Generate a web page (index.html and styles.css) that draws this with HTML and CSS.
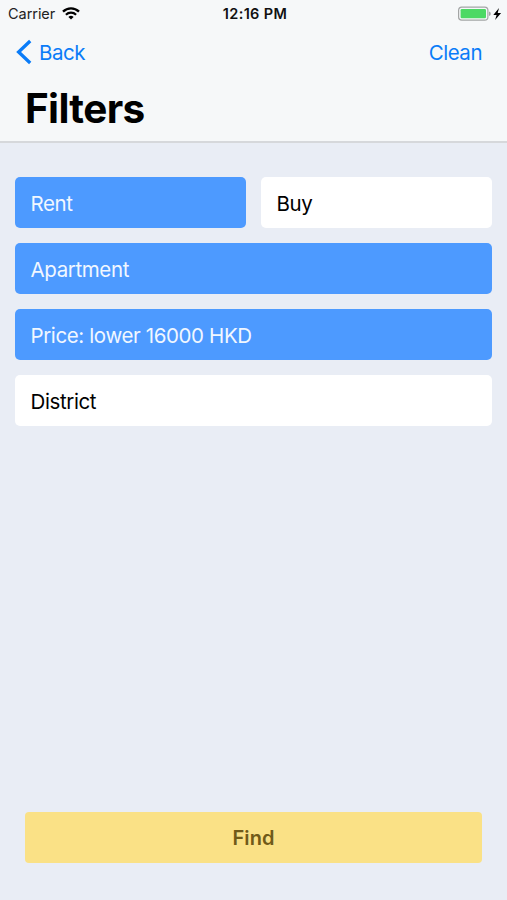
FILE: index.html
```html
<!DOCTYPE html>
<html lang="en">
<head>
<meta charset="utf-8">
<title>Filters</title>
<link rel="stylesheet" href="styles.css">
</head>
<body>
<header class="header">
  <div class="status">
    <div class="carrier"><span class="carrier-name">Carrier</span>
      <svg class="wifi" viewBox="0 0 18 13" width="18" height="13"><path d="M1 4.600a11.600 11.600 0 0 1 16 0" fill="none" stroke="#000" stroke-width="2.400"/><path d="M3.900 7.700a7.400 7.400 0 0 1 10.200 0" fill="none" stroke="#000" stroke-width="2.200"/><path d="M9 12.600L6.400 10a3.700 3.700 0 0 1 5.200 0z"/></svg>
    </div>
    <div class="time">12:16 PM</div>
    <div class="power">
      <svg viewBox="0 0 44 16" width="44" height="16"><rect x=".6" y="1.100" width="29.300" height="13" rx="3.200" fill="none" stroke="#a3a5a5" stroke-width="1.200"/><rect x="2.600" y="3" width="25.400" height="9.200" rx="1.200" fill="#4cd964"/><path d="M31 5.500q1.800.6 1.800 2.300t-1.800 2.300z" fill="#a3a5a5"/><path d="M41 2l-5.700 6.900h3.300L37.100 14l6-7.100h-3.400z"/></svg>
    </div>
  </div>
  <nav class="nav">
    <a class="back"><svg viewBox="0 0 16 26" width="16" height="26"><path d="M14.200 2L2.600 13l11.600 11" fill="none" stroke="#0a7cf8" stroke-width="3.300"/></svg><span>Back</span></a>
    <a class="clean">Clean</a>
  </nav>
  <h1 class="title">Filters</h1>
</header>
<main class="filters">
  <div class="row"><div class="option on">Rent</div><div class="option">Buy</div></div>
  <div class="option on">Apartment</div>
  <div class="option on">Price: lower 16000 HKD</div>
  <div class="option">District</div>
</main>
<footer class="footer"><button class="find">Find</button></footer>
</body>
</html>
```
FILE: styles.css
```css
* { box-sizing: border-box; }
body { margin: 0; height: 900px; display: flex; flex-direction: column; background: #e9edf5; font-family: Inter, "Liberation Sans", sans-serif; color: #000; }
.header { height: 143px; background: #f6f8f9; border-bottom: 2px solid #d6d8db; }
.status { height: 27px; display: grid; grid-template-columns: 1fr auto 1fr; align-items: center; padding: 0 5px 0 8px; }
.carrier { display: flex; align-items: center; gap: 7px; font-size: 14.500px; letter-spacing: -.05px; color: #222; }
.time { font-size: 14.500px; font-weight: 600; letter-spacing: .35px; color: #111; }
.power { display: flex; justify-content: flex-end; }
.nav { height: 50px; display: flex; align-items: center; justify-content: space-between; padding: 0 25px 0 16px; color: #0a7cf8; font-size: 20.500px; letter-spacing: -.5px; }
.back { display: flex; align-items: center; gap: 7px; }
.title { margin: 0; padding-left: 25px; font-size: 40.500px; line-height: 64px; font-weight: 700; letter-spacing: -.65px; }
.filters { flex: 1; display: flex; flex-direction: column; gap: 15px; padding: 34px 15px; }
.row { display: grid; grid-template-columns: 1fr 1fr; gap: 15px; }
.option { height: 51px; flex: none; display: flex; align-items: center; padding: 2px 0 0 15.500px; border-radius: 5px; background: #fff; font-size: 20.500px; letter-spacing: -.38px; }
.on { background: #4d9aff; color: #f1f7ff; }
.footer { padding: 0 25px 37px; }
.find { width: 100%; height: 51px; padding: 1px 0 0; border: 0; border-radius: 4px; background: #fae186; color: #705a18; font: 600 20px Inter, sans-serif; letter-spacing: .1px; display: block; }
```
